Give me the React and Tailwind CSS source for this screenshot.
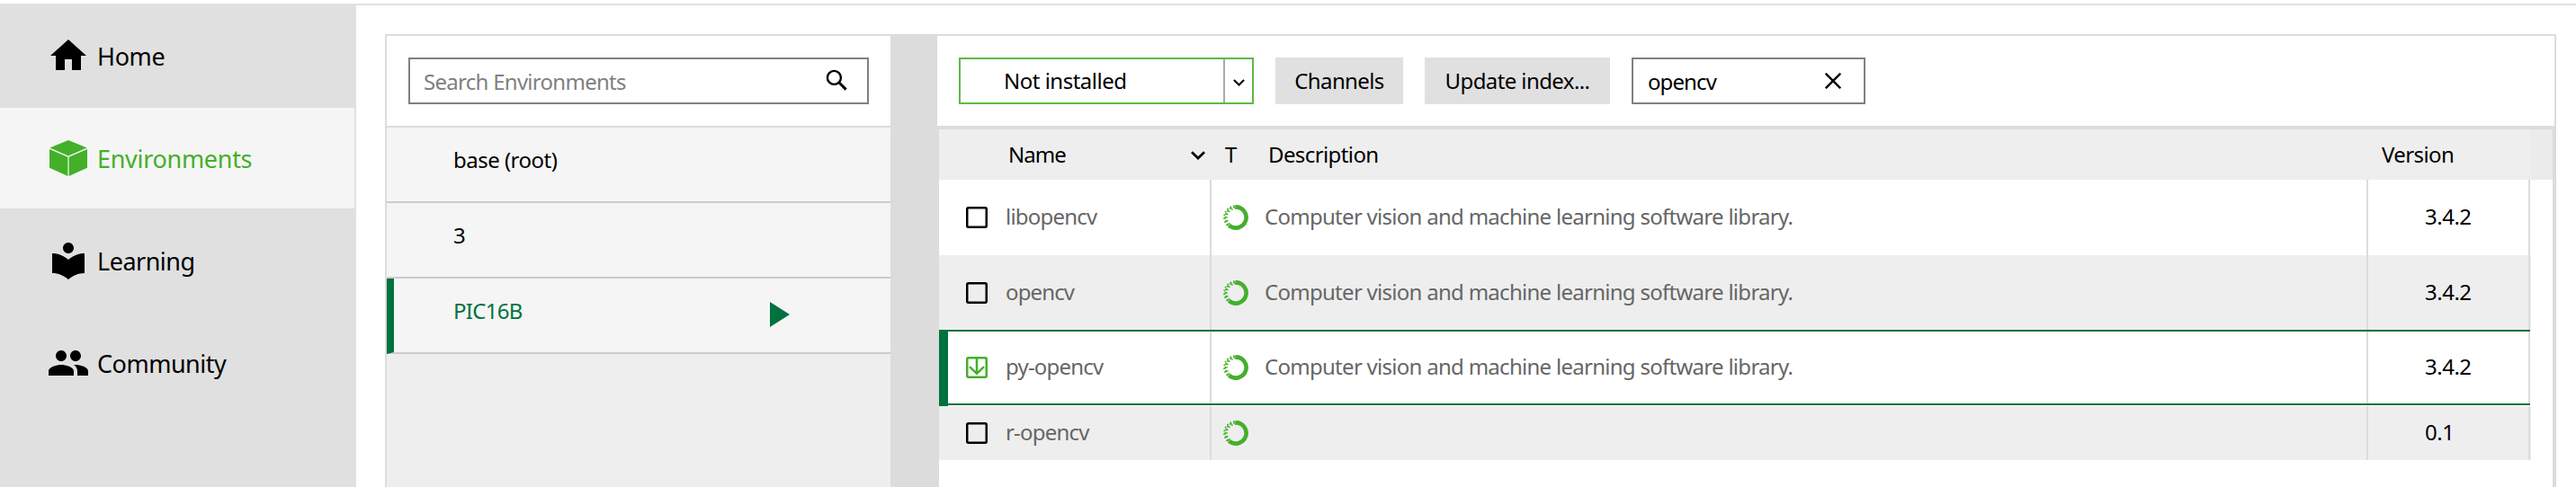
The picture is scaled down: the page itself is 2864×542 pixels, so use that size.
import React from 'react'

const ICONS = {
  home: 'M10 20v-6h4v6h5v-8h3L12 3 2 12h3v8z',
  learning:
    'M12 11.55C9.64 9.35 6.48 8 3 8v11c3.48 0 6.64 1.35 9 3.55 2.36-2.19 5.52-3.55 9-3.55V8c-3.48 0-6.64 1.35-9 3.55zM12 8c1.66 0 3-1.34 3-3s-1.34-3-3-3-3 1.34-3 3 1.34 3 3 3z',
  community:
    'M16 11c1.66 0 2.99-1.34 2.99-3S17.66 5 16 5c-1.66 0-3 1.34-3 3s1.34 3 3 3zm-8 0c1.66 0 2.99-1.34 2.99-3S9.66 5 8 5C6.34 5 5 6.34 5 8s1.34 3 3 3zm0 2c-2.33 0-7 1.17-7 3.5V19h14v-2.5c0-2.33-4.67-3.5-7-3.5zm8 0c-.29 0-.62.02-.97.05 1.16.84 1.97 1.97 1.97 3.45V19h6v-2.5c0-2.33-4.67-3.5-7-3.5z',
}

function Glyph({ name }) {
  return (
    <svg viewBox="0 0 24 24" className="h-12 w-12 shrink-0" fill="currentColor">
      <path d={ICONS[name]} />
    </svg>
  )
}

function Cube() {
  return (
    <svg viewBox="0 0 48 48" className="h-12 w-12 shrink-0" fill="currentColor">
      <path d="M24 4L44.6 12.6L24 21.4L3.4 12.6Z" />
      <path d="M3 14L23.4 22.7V44L3 34.8Z" />
      <path d="M45 14L24.6 22.7V44L45 34.8Z" />
    </svg>
  )
}

function Chevron({ className }) {
  return (
    <svg viewBox="0 0 16 10" className={className} fill="none" stroke="currentColor" strokeWidth="2.7">
      <path d="M1 1.2L8 8L15 1.2" />
    </svg>
  )
}

function Ring() {
  return (
    <svg viewBox="0 0 28 28" className="h-7 w-7 shrink-0" fill="none" stroke="#43b02a">
      <path d="M13.5 2.4A11.6 11.6 0 1 1 6.4 22.8" strokeWidth="4.6" />
      <path d="M6.2 22.6A11.6 11.6 0 0 1 14 2.4" strokeWidth="1.7" strokeDasharray="2.6 1.5" />
      <path d="M4.6 23A13.1 13.1 0 0 1 13 0.9" strokeWidth="1.6" strokeDasharray="1.7 2.2" />
      <path d="M7.4 21.4A9.9 9.9 0 0 1 14 4.1" strokeWidth="1.5" strokeDasharray="1.6 2.1" />
    </svg>
  )
}

function Checkbox({ marked }) {
  return (
    <svg viewBox="0 0 24 24" className="h-6 w-6 shrink-0" fill="none" stroke={marked ? '#43b02a' : '#000'} strokeWidth="2.5">
      <rect x="1.25" y="1.25" width="21.5" height="21.5" rx="1.4" />
      {marked && <path d="M12 2V19M4 11.2L12 18.8L20 11.2" />}
    </svg>
  )
}

function NavItem({ icon, label, active, className }) {
  return (
    <div className={`flex items-center pl-[52px] text-[27px] ${active ? 'mr-[2px] bg-[#f5f5f5] text-[#43b02a]' : 'text-black'} ${className}`}>
      {icon}
      <span className="ml-2 pt-[2px]">{label}</span>
    </div>
  )
}

const PACKAGES = [
  { name: 'libopencv', tracking: 'tracking-[-0.79px]', desc: true, version: '3.4.2', row: 'h-[84px]' },
  { name: 'opencv', tracking: 'tracking-[-0.88px]', desc: true, version: '3.4.2', row: 'h-[83px] bg-[#eeeeee]' },
  { name: 'py-opencv', tracking: 'tracking-[-0.8px]', desc: true, version: '3.4.2', row: 'h-[85px]', marked: true },
  { name: 'r-opencv', tracking: 'tracking-[-0.8px]', desc: false, version: '0.1', row: 'h-[60px] bg-[#eeeeee]' },
]

function PackageRow({ p }) {
  const line = p.marked ? 'h-[84px] border-y-2 border-[#00723f] ' : 'h-full '
  return (
    <div className={`flex w-[1770px] ${p.row}`}>
      {p.marked && <div className="h-[85px] w-[10px] shrink-0 bg-[#00723f]" />}
      <div className={`flex min-w-0 items-center ${p.marked ? 'w-[291px]' : 'w-[301px]'} shrink-0 ${line}`}>
        <div className={`flex items-center ${p.marked ? 'pl-5' : 'pl-[30px]'}`}>
          <Checkbox marked={p.marked} />
          <span className={`ml-5 pb-[2px] text-[#666666] ${p.tracking}`}>{p.name}</span>
        </div>
      </div>
      <div className={`flex items-center ${line}`}>
        <div className="h-full w-[2px] bg-[#dcdcdc]" />
        <div className="flex w-[1284px] items-center pl-[13px]">
          <Ring />
          <span className="ml-[18px] pb-[2px] tracking-[-0.72px] text-[#666666]">
            {p.desc ? 'Computer vision and machine learning software library.' : ''}
          </span>
        </div>
        <div className="h-full w-[2px] bg-[#dcdcdc]" />
        <div className="w-[178px] pb-[2px] pl-[63px] tracking-[-0.5px]">{p.version}</div>
        <div className="h-full w-[2px] bg-[#dcdcdc]" />
      </div>
    </div>
  )
}

function Sidebar() {
  return (
    <nav className="flex w-[396px] shrink-0 flex-col bg-[#e0e0e0]">
      <NavItem icon={<Glyph name="home" />} label="Home" className="h-[116px] tracking-[-0.36px]" />
      <NavItem icon={<Cube />} label="Environments" active className="h-[112px] tracking-[-0.3px]" />
      <NavItem icon={<Glyph name="learning" />} label="Learning" className="mt-[2px] h-[112px] tracking-[-0.5px]" />
      <NavItem icon={<Glyph name="community" />} label="Community" className="mt-[2px] h-[112px] tracking-[-0.5px]" />
    </nav>
  )
}

function EnvironmentList() {
  return (
    <section className="flex w-[562px] shrink-0 flex-col border-l-2 border-t-2 border-[#dcdcdc] bg-[#eeeeee]">
      <div className="h-[102px] shrink-0 border-b-2 border-[#dcdcdc] bg-white px-6 pt-6">
        <div className="flex h-[52px] items-center justify-between border-2 border-[#808080] pl-[15px] pr-[22px]">
          <span className="pt-[2px] tracking-[-0.72px] text-[#808080]">Search Environments</span>
          <svg viewBox="0 0 24 24" className="mb-[2px] h-6 w-6" fill="none" stroke="#000">
            <circle cx="9.4" cy="9.4" r="7.5" strokeWidth="2.4" />
            <path d="M14.8 14.8L22.6 22.6" strokeWidth="2.9" />
          </svg>
        </div>
      </div>
      <div className="h-[84px] shrink-0 border-b-2 border-[#cccccc] bg-[#f5f5f5] pl-[74px] pt-[18px] tracking-[-0.52px]">base (root)</div>
      <div className="h-[84px] shrink-0 border-b-2 border-[#cccccc] bg-[#f5f5f5] pl-[74px] pt-[18px]">3</div>
      <div className="flex h-[84px] shrink-0 border-b-2 border-l-8 border-b-[#cccccc] border-l-[#00723f] bg-[#f5f5f5] pl-[66px] pt-[18px] text-[#00723f]">
        <span className="w-[352px] tracking-[-0.7px]">PIC16B</span>
        <svg viewBox="0 0 22 28" className="mt-2 h-7 w-[22px]" fill="currentColor">
          <path d="M0 0L22 14L0 28Z" />
        </svg>
      </div>
    </section>
  )
}

function PackageTable() {
  return (
    <section className="flex w-[1800px] shrink-0 flex-col border-t-2 border-[#dcdcdc]">
      <div className="flex h-[100px] shrink-0 items-start gap-6 border-r-2 border-[#dcdcdc] pl-6 pt-6">
        <div className="flex h-[52px] w-[328px] border-2 border-[#5fb946]">
          <div className="flex w-[292px] items-center pl-12 tracking-[-0.5px]">Not installed</div>
          <div className="flex flex-1 items-center justify-center border-l-2 border-[#aaaaaa]">
            <Chevron className="mt-[3px] h-2 w-[13px]" />
          </div>
        </div>
        <button className="h-[52px] w-[142px] bg-[#e0e0e0] tracking-[-0.6px]">Channels</button>
        <button className="h-[52px] w-[206px] bg-[#e0e0e0] tracking-[-0.6px]">Update index...</button>
        <div className="flex h-[52px] w-[260px] items-center justify-between border-2 border-[#808080] pl-4 pr-[25px]">
          <span className="pt-[2px] tracking-[-0.9px]">opencv</span>
          <svg viewBox="0 0 18 18" className="h-[18px] w-[18px]" stroke="#000" strokeWidth="2.4">
            <path d="M0.8 0.8L17.2 17.2M17.2 0.8L0.8 17.2" />
          </svg>
        </div>
      </div>
      <div className="flex flex-1 flex-col border-l-2 border-r-4 border-t-4 border-[#dcdcdc]">
        <div className="flex h-14 shrink-0 bg-[#eeeeee]">
          <div className="flex w-[316px] items-center justify-between pl-[77px] pr-5">
            <span className="tracking-[-1px]">Name</span>
            <Chevron className="mt-px h-[10px] w-4" />
          </div>
          <div className="flex w-[50px] items-center pl-[2px]">T</div>
          <div className="flex w-[1237px] items-center tracking-[-0.6px]">Description</div>
          <div className="flex w-[167px] items-center pl-px tracking-[-0.6px]">Version</div>
          <div className="flex-1 bg-[#ebebeb]" />
        </div>
        {PACKAGES.map((p) => (
          <PackageRow key={p.name} p={p} />
        ))}
      </div>
    </section>
  )
}

export default function App() {
  return (
    <div className="flex h-[542px] w-[2864px] flex-col overflow-hidden bg-white pt-1 font-['Noto_Sans',sans-serif] text-[24px] leading-9 text-black">
      <div className="flex flex-1">
        <Sidebar />
        <main className="flex flex-1 border-t-2 border-[#e0e0e0] pl-8 pt-8">
          <EnvironmentList />
          <div className="w-[52px] shrink-0 bg-[#dcdcdc]" />
          <PackageTable />
        </main>
      </div>
    </div>
  )
}
